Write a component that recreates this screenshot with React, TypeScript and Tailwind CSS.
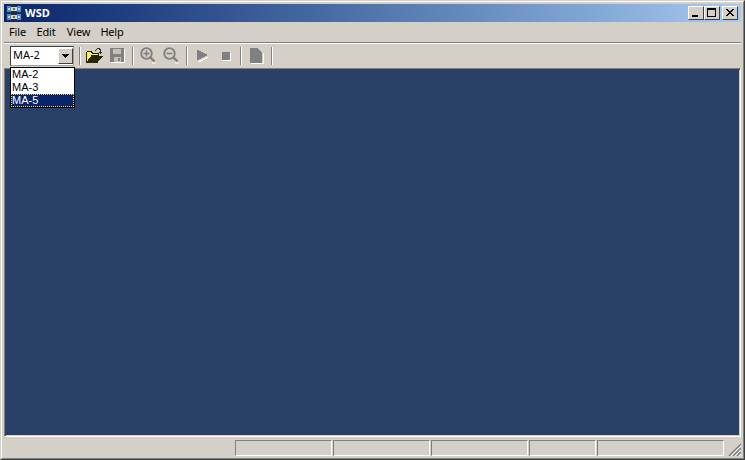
const menus = [
  { label: "File", width: "w-[27px]" },
  { label: "Edit", width: "w-[30px]" },
  { label: "View", width: "w-[35px]" },
  { label: "Help", width: "w-[32px]" },
];

const panes = ["w-[97px]", "w-[97px]", "w-[97px]", "w-[67px]", "w-[127px]"];

const raised = "border border-t-white border-l-white border-r-[#404040] border-b-[#404040] bg-[#d4d0c8]";

function Separator() {
  return <div className="mx-[3px] h-[18px] w-[2px] shrink-0 border-l border-r border-l-[#808080] border-r-white" />;
}

function AppIcon() {
  return (
    <svg width="16" height="16" viewBox="0 0 16 16" shapeRendering="crispEdges">
      <rect width="16" height="16" fill="#1c2c58" />
      <path d="M1 1h4v6H1zM11 1h4v6h-4zM1 9h4v6H1zM11 9h4v6h-4z" fill="#4f86c8" />
      <path d="M5 2h6v4H5zM5 10h6v4H5z" fill="#d8d8b8" />
      <path d="M7 3h2v2H7zM7 11h2v2H7z" fill="#5c7848" />
      <path d="M2 3h2v2H2zM12 3h2v2h-2zM2 11h2v2H2zM12 11h2v2h-2z" fill="#b8d0ec" />
    </svg>
  );
}

function CaptionButton({ kind }: { kind: "min" | "max" | "close" }) {
  return (
    <div className={`flex h-[14px] w-[16px] items-center justify-center ${raised}`}>
      <svg width="12" height="10" viewBox="0 0 12 10" shapeRendering="crispEdges">
        {kind === "min" && <rect x="2" y="7" width="6" height="2" fill="#000" />}
        {kind === "max" && <path d="M1 0h9v9H1zM2 2v6h7V2z" fill="#000" fillRule="evenodd" />}
        {kind === "close" && (
          <path d="M2 1h2v1h1v1h2V2h1V1h2v1H9v1H8v1H7v1h1v1h1v1h1v1H8V7H7V6H5v1H4v1H2V7h1V6h1V5h1V4H4V3H3V2H2z" fill="#000" />
        )}
      </svg>
    </div>
  );
}

function OpenIcon() {
  return (
    <svg width="17" height="15" viewBox="0 0 17 15" shapeRendering="crispEdges">
      <path d="M1 4h5l1 1h6v3H5v1H4v1H3v1H2v2H1z" fill="#f8f060" />
      <path d="M5 8h11v1h-1v1h-1v1h-1v1h-1v2H2v-2h1v-1h1v-1h1z" fill="#a0a020" />
      <path d="M1 3h5v1h1v1h6v3h4v1h-1v1h-1v1h-1v1h-1v1h-1v2H0V4h1zM1 5v8h1v-2h1v-1h1V9h1V7h7V6H6V5H5V4H1z" fill="#282800" fillRule="evenodd" />
      <path d="M9 2h1V1h1V0h3v1h1v3h1v1h-1v1h-1V5h-1V4h1V2h-1V1h-2v1h-1v1H9z" fill="#303030" />
    </svg>
  );
}

function SaveIcon() {
  return (
    <svg width="15" height="15" viewBox="0 0 15 15" shapeRendering="crispEdges">
      <rect x="0" y="0" width="14" height="14" fill="#808080" />
      <rect x="3" y="1" width="8" height="5" fill="#c4c0b8" />
      <rect x="4" y="9" width="7" height="5" fill="#c4c0b8" />
      <rect x="8" y="10" width="2" height="3" fill="#808080" />
      <path d="M14 1h1v14H1v-1h13z" fill="#fff" />
    </svg>
  );
}

function ZoomIcon({ plus }: { plus?: boolean }) {
  return (
    <svg width="17" height="17" viewBox="0 0 17 17">
      <circle cx="6.5" cy="6.5" r="5.3" fill="#d4d0c8" stroke="#808080" strokeWidth="1.8" />
      <path d="M10.5 10.5l4 4" stroke="#808080" strokeWidth="2.4" />
      <path d="M3.5 6.5h6" stroke="#808080" strokeWidth="1.6" />
      {plus && <path d="M6.5 3.5v6" stroke="#808080" strokeWidth="1.6" />}
      <path d="M12 16h3.5" stroke="#fff" strokeWidth="1" />
    </svg>
  );
}

function PlayIcon() {
  return (
    <svg width="12" height="12" viewBox="0 0 12 12" shapeRendering="crispEdges">
      <path d="M0 0h2v1h2v1h2v1h2v1h2v2H8v1H6v1H4v1H2v1H0z" fill="#808080" />
      <path d="M1 11h2v-1h2V9h2V8h2V7h2v1h-1v1H8v1H6v1H4v1H1z" fill="#fff" />
    </svg>
  );
}

function StopIcon() {
  return (
    <svg width="10" height="10" viewBox="0 0 10 10" shapeRendering="crispEdges">
      <rect width="8" height="8" x="1" y="1" fill="#808080" />
      <path d="M9 2h1v8H2V9h7z" fill="#fff" />
    </svg>
  );
}

function PageIcon() {
  return (
    <svg width="14" height="16" viewBox="0 0 14 16" shapeRendering="crispEdges">
      <path d="M0 0h8v1h1v1h1v1h1v1h1v11H0z" fill="#808080" />
      <path d="M13 5h1v11H1v-1h12z" fill="#fff" />
    </svg>
  );
}

function ToolSlot({ children, width }: { children: React.ReactNode; width: string }) {
  return <div className={`flex h-[22px] shrink-0 items-center justify-center ${width}`}>{children}</div>;
}

export default function App() {
  return (
    <div
      className="h-[460px] w-[745px] overflow-hidden border border-t-[#d4d0c8] border-l-[#d4d0c8] border-r-[#404040] border-b-[#404040] bg-[#d4d0c8] text-[11px] text-black"
      style={{ fontFamily: '"Noto Sans", "Liberation Sans", sans-serif' }}
    >
      <div className="flex h-full flex-col border border-t-white border-l-white border-r-[#808080] border-b-[#808080] p-[2px]">
        {/* title bar */}
        <div className="flex h-[18px] shrink-0 items-center bg-gradient-to-r from-[#0a246a] to-[#a6caf0] pr-[3px] pl-[2px]">
          <AppIcon />
          <span className="ml-[3px] text-[11px] font-bold text-white">WSD</span>
          <div className="ml-auto flex items-center">
            <CaptionButton kind="min" />
            <CaptionButton kind="max" />
            <div className="ml-[2px]">
              <CaptionButton kind="close" />
            </div>
          </div>
        </div>

        {/* menu */}
        <div className="flex h-[20px] shrink-0 items-center tracking-[-0.2px]">
          {menus.map((m) => (
            <div key={m.label} className={`text-center ${m.width}`}>
              {m.label}
            </div>
          ))}
        </div>

        {/* toolbar */}
        <div className="relative flex h-[26px] shrink-0 items-center border-t border-t-[#808080] pl-[6px] shadow-[inset_0_1px_0_#fff]">
          <div className="mr-[2px] flex h-[20px] w-[64px] shrink-0 items-center border border-t-[#404040] border-l-[#404040] border-r-[#a0a0a0] border-b-[#a0a0a0] bg-white pl-[2px]">
            <span className="flex-1">MA-2</span>
            <div className="flex h-[16px] w-[15px] items-center justify-center border border-t-white border-l-white border-r-[#404040] border-b-[#404040] bg-[#d4d0c8]">
              <svg width="7" height="4" viewBox="0 0 7 4" shapeRendering="crispEdges">
                <path d="M0 0h7v1H6v1H5v1H4v1H3V3H2V2H1V1H0z" fill="#000" />
              </svg>
            </div>
          </div>
          <Separator />
          <ToolSlot width="w-[21px]"><OpenIcon /></ToolSlot>
          <ToolSlot width="w-[24px]"><SaveIcon /></ToolSlot>
          <Separator />
          <ToolSlot width="w-[23px]"><ZoomIcon plus /></ToolSlot>
          <ToolSlot width="w-[23px]"><ZoomIcon /></ToolSlot>
          <Separator />
          <ToolSlot width="w-[23px]"><PlayIcon /></ToolSlot>
          <ToolSlot width="w-[23px]"><StopIcon /></ToolSlot>
          <Separator />
          <ToolSlot width="w-[23px]"><PageIcon /></ToolSlot>
          <Separator />

          {/* combo list */}
          <div className="absolute top-[24px] left-[6px] z-10 flex w-[65px] flex-col border border-black bg-white font-['Liberation_Sans']">
            <div className="h-[13px] pl-[1px] leading-[13px]">MA-2</div>
            <div className="h-[13px] pl-[1px] leading-[13px]">MA-3</div>
            <div className="h-[13px] border border-dotted border-[#f0d070] bg-[#0a246a] leading-[11px] text-white">MA-5</div>
          </div>
        </div>

        {/* client area */}
        <div className="min-h-0 flex-1 border border-t-[#808080] border-l-[#808080] border-r-white border-b-white bg-[#294168] shadow-[inset_1px_1px_0_#404040,inset_-1px_-1px_0_#d4d0c8]" />

        {/* status bar */}
        <div className="flex h-[19px] shrink-0 items-end justify-end gap-[1px]">
          {panes.map((w, i) => (
            <div
              key={i}
              className={`h-[16px] border border-t-[#808080] border-l-[#808080] border-r-white border-b-white ${w}`}
            />
          ))}
          <div className="flex h-[16px] w-[16px] items-end justify-end">
            <svg width="13" height="13" viewBox="0 0 13 13">
              <path d="M13 1L1 13M13 5L5 13M13 9L9 13" stroke="#808080" strokeWidth="1.5" />
              <path d="M13 3L3 13M13 7L7 13M13 11L11 13" stroke="#fff" strokeWidth="1" />
            </svg>
          </div>
        </div>
      </div>
    </div>
  );
}
